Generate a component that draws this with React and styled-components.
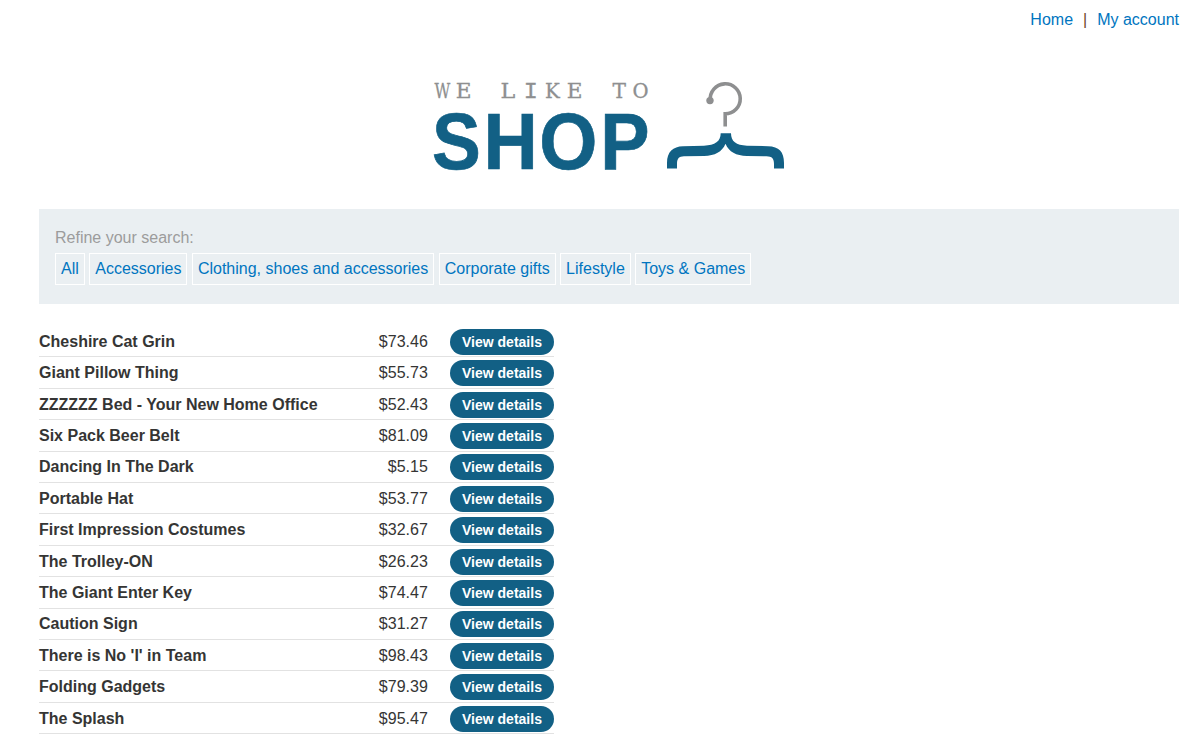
import React from "react";
import styled, { createGlobalStyle } from "styled-components";

const GlobalStyle = createGlobalStyle`
  body {
    margin: 0;
    background: #fff;
    color: #353534;
    font: 16px/18px "Liberation Sans", Arial, sans-serif;
    overflow: hidden;
  }
`;

const Page = styled.div`
  height: 737px;
  overflow: hidden;
  box-sizing: border-box;
  padding: 11px 18px 0 39px;
`;

const TopNav = styled.nav`
  display: flex;
  justify-content: flex-end;
  gap: 10px;
`;

const Link = styled.a`
  color: #0075c0;
  text-decoration: none;
`;

const Divider = styled.span`
  color: #6e4a28;
`;

const LogoArea = styled.header`
  display: flex;
  justify-content: center;
  padding: 49px 0 37px;
`;

const LogoSvg = styled.svg`
  display: block;
  width: 354px;
  height: 94px;
  overflow: visible;
`;

const FilterPanel = styled.section`
  height: 95px;
  box-sizing: border-box;
  padding: 20px 16px;
  background: #eaeff2;
`;

const FilterLabel = styled.div`
  color: #9c9c9c;
  margin-bottom: 6px;
`;

const Filters = styled.div`
  display: flex;
  gap: 4.45px;
`;

const FilterLink = styled(Link)`
  padding: 6px 5px;
  border: 1px solid #fff;
  white-space: nowrap;
`;

const ProductList = styled.section`
  width: 515px;
  padding-top: 22px;
`;

const ProductRow = styled.div`
  display: grid;
  grid-template-columns: 309px 79.8px 104px;
  justify-content: start;
  box-sizing: border-box;
  height: 31.41px;
  padding-top: 2.8px;
  border-bottom: 1px solid #e2e2e2;
`;

const Name = styled.span`
  font-weight: 700;
  padding-top: 4px;
  white-space: nowrap;
`;

const Price = styled.span`
  padding-top: 4px;
  text-align: right;
`;

const DetailsButton = styled.a`
  box-sizing: border-box;
  width: 104px;
  height: 26px;
  margin-left: 22.2px;
  border-radius: 13px;
  background: #126085;
  color: #fff;
  font-size: 14px;
  font-weight: 700;
  line-height: 26px;
  text-align: center;
  white-space: nowrap;
`;

const SERIF = '"DejaVu Serif", serif';
const MONO = '"Liberation Mono", monospace';
const SANS = '"Liberation Sans", Arial, sans-serif';

// Each letter: character, x origin, horizontal scale, font, size.
const tagline = [
  ["W", 434.4, 0.76, SERIF, 20.2],
  ["E", 455.8, 1.07, SERIF, 20.2],
  ["L", 500.6, 1.1, SERIF, 20.2],
  ["I", 523.8, 1.06, MONO, 22.2],
  ["K", 545, 0.98, SERIF, 20.2],
  ["E", 566.8, 1.07, SERIF, 20.2],
  ["T", 612.6, 1, SERIF, 20.2],
  ["O", 632.6, 0.97, SERIF, 20.2],
];

const wordmark = [
  ["S", 432, 0.91],
  ["H", 483.4, 0.935],
  ["O", 539.3, 0.93],
  ["P", 600.2, 0.92],
];

function Logo() {
  return (
    <LogoSvg viewBox="432 78 354 94">
      <g fill="#8e8f90" stroke="#8e8f90" strokeWidth="0.3">
        {tagline.map(([ch, x, s, font, size]) => (
          <text key={x} transform={`translate(${x} 97.5) scale(${s} 1)`} fontFamily={font} fontSize={size}>
            {ch}
          </text>
        ))}
      </g>
      <g fill="#126085" stroke="#126085" strokeWidth="0.7" fontFamily={SANS} fontWeight="700" fontSize="80.4">
        {wordmark.map(([ch, x, s]) => (
          <text key={x} transform={`translate(${x} 168.6) scale(${s} 1)`}>
            {ch}
          </text>
        ))}
      </g>
      <path d="M710.3 100.2A15 15 0 1 1 725.2 113.8V126.5" fill="none" stroke="#8e8f90" strokeWidth="3.6" />
      <circle cx="710" cy="100.6" r="3.7" fill="#8e8f90" />
      <path
        fill="#126085"
        d="M667 168.6V163C667 151.5 673 146.6 683 146.2L704 145.7C715 145.2 720.7 141.5 720.7 133.3H731C731 141.5 736 145.2 747 145.7L768 146.2C779 146.6 784 151.5 784 163V168.6H774V164C774 158.5 772 156.5 766.5 156.3L747 156C736 155.5 729 152 725.5 143.7C722 152 715 155.5 704 156L684 156.3C679 156.5 677 158.5 677 164V168.6Z"
      />
    </LogoSvg>
  );
}

const filters = ["All", "Accessories", "Clothing, shoes and accessories", "Corporate gifts", "Lifestyle", "Toys & Games"];

const products = [
  ["Cheshire Cat Grin", "$73.46"],
  ["Giant Pillow Thing", "$55.73"],
  ["ZZZZZZ Bed - Your New Home Office", "$52.43"],
  ["Six Pack Beer Belt", "$81.09"],
  ["Dancing In The Dark", "$5.15"],
  ["Portable Hat", "$53.77"],
  ["First Impression Costumes", "$32.67"],
  ["The Trolley-ON", "$26.23"],
  ["The Giant Enter Key", "$74.47"],
  ["Caution Sign", "$31.27"],
  ["There is No 'I' in Team", "$98.43"],
  ["Folding Gadgets", "$79.39"],
  ["The Splash", "$95.47"],
];

export default function App() {
  return (
    <Page>
      <GlobalStyle />
      <TopNav>
        <Link>Home</Link>
        <Divider>|</Divider>
        <Link>My account</Link>
      </TopNav>
      <LogoArea>
        <Logo />
      </LogoArea>
      <FilterPanel>
        <FilterLabel>Refine your search:</FilterLabel>
        <Filters>
          {filters.map((f) => (
            <FilterLink key={f}>{f}</FilterLink>
          ))}
        </Filters>
      </FilterPanel>
      <ProductList>
        {products.map(([name, price]) => (
          <ProductRow key={name}>
            <Name>{name}</Name>
            <Price>{price}</Price>
            <DetailsButton>View details</DetailsButton>
          </ProductRow>
        ))}
      </ProductList>
    </Page>
  );
}
